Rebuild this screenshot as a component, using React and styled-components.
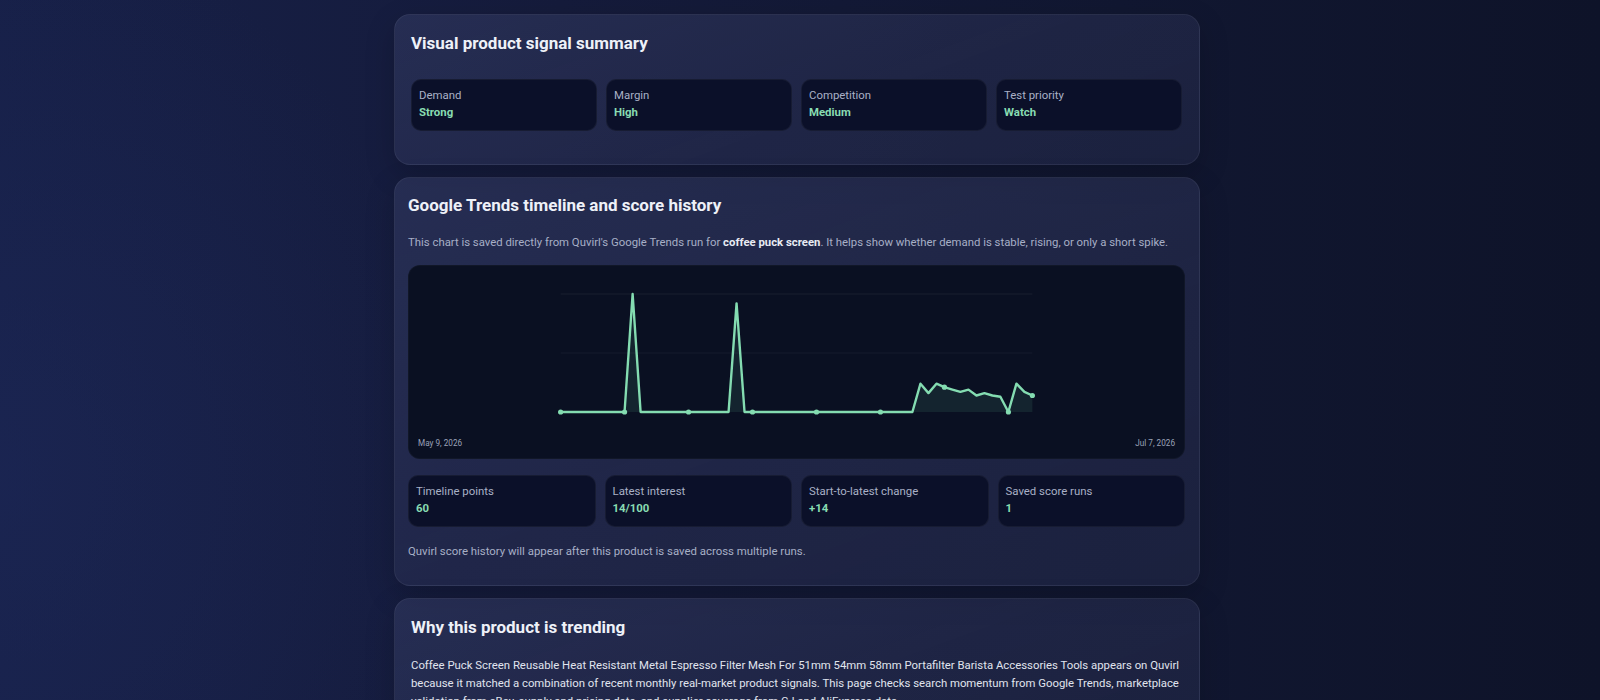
import React from 'react';
import styled, { createGlobalStyle } from 'styled-components';

const GlobalStyle = createGlobalStyle`
    * {
        box-sizing: border-box;
    }
    body {
        margin: 0;
        font-family: Roboto, "Liberation Sans", Arial, sans-serif;
        background-color: #121833;
        background-image:
            radial-gradient(ellipse 650px 800px at 0% 65%, rgba(30, 42, 92, 0.45), transparent 70%),
            linear-gradient(90deg, #172048 0%, #151b3b 35%, #111731 70%, #0e1329 100%);
        min-height: 100vh;
        overflow: hidden;
    }
`;

const Page = styled.main`
    width: 812px;
    margin: 0 auto;
    padding: 14px 6px 0 0;
    display: flex;
    flex-direction: column;
    gap: 12px;
`;

const Card = styled.section`
    border-radius: 16px;
    border: 1px solid rgba(255, 255, 255, 0.06);
    background: linear-gradient(160deg, rgba(52, 60, 100, 0.55) 0%, rgba(44, 50, 86, 0.5) 55%, rgba(36, 42, 74, 0.55) 100%);
    box-shadow: 0 10px 30px rgba(0, 0, 0, 0.18);
    padding: ${p => p.$pad || '16px'};
`;

const Title = styled.h2`
    margin: 0;
    font-size: 17px;
    line-height: 24px;
    font-weight: 700;
    color: #eef1f8;
`;

const TileGrid = styled.div`
    display: grid;
    grid-template-columns: repeat(4, 1fr);
    gap: 9px;
    margin-top: ${p => p.$top || '24px'};
`;

const Tile = styled.div`
    background: #0b1029;
    border: 1px solid rgba(255, 255, 255, 0.05);
    border-radius: 10px;
    padding: 7px 7px 9px;
    display: flex;
    flex-direction: column;
`;

const TileLabel = styled.span`
    font-size: 11.4px;
    line-height: 17px;
    color: #a9b0c6;
`;

const TileValue = styled.span`
    font-size: 11.4px;
    line-height: 17px;
    font-weight: 700;
    color: #88dcb2;
`;

const Lead = styled.p`
    margin: 16px 0 0;
    font-size: 11.35px;
    line-height: 18px;
    color: #a7afc6;

    strong {
        color: #e8ebf3;
        font-weight: 700;
    }
`;

const ChartBox = styled.div`
    margin-top: 14px;
    height: 194px;
    border-radius: 12px;
    background: #0a1022;
    border: 1px solid rgba(255, 255, 255, 0.03);
    display: flex;
    flex-direction: column;
    overflow: hidden;
`;

const ChartSvg = styled.svg`
    display: block;
    width: 100%;
    height: 170px;
`;

const DateRow = styled.div`
    display: flex;
    justify-content: space-between;
    padding: 1px 9px 0 9px;
    font-size: 8.2px;
    line-height: 12px;
    color: #9aa2b8;
`;

const Note = styled.p`
    margin: 15px 0 0;
    font-size: 11.4px;
    line-height: 18px;
    color: #a7afc6;
`;

const Body = styled.p`
    margin: 17px 0 0;
    font-size: 11.35px;
    line-height: 18px;
    color: #e0e4ee;
`;

const summary = [
    { label: 'Demand', value: 'Strong' },
    { label: 'Margin', value: 'High' },
    { label: 'Competition', value: 'Medium' },
    { label: 'Test priority', value: 'Watch' },
];

const stats = [
    { label: 'Timeline points', value: '60' },
    { label: 'Latest interest', value: '14/100' },
    { label: 'Start-to-latest change', value: '+14' },
    { label: 'Saved score runs', value: '1' },
];

// 60 trend values (0-100)
const series = (() => {
    const v = new Array(60).fill(0);
    v[9] = 100;
    v[22] = 92;
    const tail = [24, 16, 24, 21, 19, 17, 19, 14, 16, 14, 13, 0, 24, 17, 14];
    tail.forEach((t, i) => { v[45 + i] = t; });
    return v;
})();

function TrendChart() {
    const x0 = 152;
    const x1 = 625;
    const top = 28;
    const base = 146;
    const step = (x1 - x0) / (series.length - 1);
    const pts = series.map((v, i) => [x0 + i * step, base - (v / 100) * (base - top)]);
    const line = pts.map(p => p.map(n => n.toFixed(1)).join(',')).join(' ');
    const area = `${x0},${base} ${line} ${x1},${base}`;
    const dots = pts.filter((_, i) => i % 8 === 0 || i === series.length - 1);

    return (
        <ChartSvg viewBox="0 0 777 170" preserveAspectRatio="none">
            <line x1={x0} x2={x1} y1={top} y2={top} stroke="rgba(255,255,255,0.07)" strokeWidth="1" />
            <line x1={x0} x2={x1} y1={(top + base) / 2} y2={(top + base) / 2} stroke="rgba(255,255,255,0.05)" strokeWidth="1" />
            <polygon points={area} fill="rgba(120, 215, 170, 0.1)" />
            <polyline points={line} fill="none" stroke="#84dcb1" strokeWidth="2.4" strokeLinejoin="round" strokeLinecap="round" />
            {dots.map(([cx, cy], i) => (
                <circle key={i} cx={cx} cy={cy} r="2.6" fill="#84dcb1" />
            ))}
        </ChartSvg>
    );
}

export default function App() {
    return (
        <>
            <GlobalStyle />
            <Page>
                <Card $pad="16px 17px 33px 16px">
                    <Title>Visual product signal summary</Title>
                    <TileGrid>
                        {summary.map(s => (
                            <Tile key={s.label}>
                                <TileLabel>{s.label}</TileLabel>
                                <TileValue>{s.value}</TileValue>
                            </Tile>
                        ))}
                    </TileGrid>
                </Card>

                <Card $pad="15px 14px 25px 13px">
                    <Title>Google Trends timeline and score history</Title>
                    <Lead>
                        This chart is saved directly from Quvirl's Google Trends run for <strong>coffee puck screen</strong>. It helps show whether demand is stable, rising, or only a short spike.
                    </Lead>
                    <ChartBox>
                        <TrendChart />
                        <DateRow>
                            <span>May 9, 2026</span>
                            <span>Jul 7, 2026</span>
                        </DateRow>
                    </ChartBox>
                    <TileGrid $top="16px">
                        {stats.map(s => (
                            <Tile key={s.label}>
                                <TileLabel>{s.label}</TileLabel>
                                <TileValue>{s.value}</TileValue>
                            </Tile>
                        ))}
                    </TileGrid>
                    <Note>Quvirl score history will appear after this product is saved across multiple runs.</Note>
                </Card>

                <Card $pad="16px 12px 24px 16px">
                    <Title>Why this product is trending</Title>
                    <Body>
                        Coffee Puck Screen Reusable Heat Resistant Metal Espresso Filter Mesh For 51mm 54mm 58mm Portafilter Barista Accessories Tools appears on Quvirl because it matched a combination of recent monthly real-market product signals. This page checks search momentum from Google Trends, marketplace validation from eBay, supply and pricing data, and supplier coverage from CJ and AliExpress data.
                    </Body>
                </Card>
            </Page>
        </>
    );
}
